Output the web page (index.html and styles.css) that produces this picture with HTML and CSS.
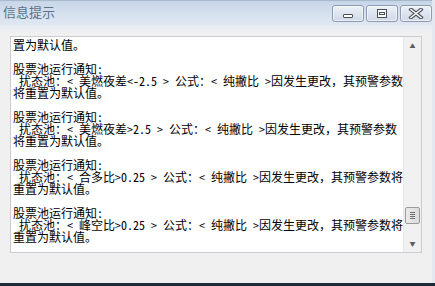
FILE: index.html
```html
<!DOCTYPE html>
<html lang="zh-CN">
<head>
    <meta charset="UTF-8">
    <title>信息提示</title>
    <link rel="stylesheet" href="styles.css">
</head>
<body>
    <div class="ventana">
        <!-- barra de título -->
        <div class="barra-titulo">
            <span class="titulo">信息提示</span>
            <div class="botones">
                <button class="btn-ventana" title="最小化">
                    <svg width="14" height="10" viewBox="0 0 14 10"><rect x="2.5" y="5.5" width="9" height="3" rx="0.5" fill="#fff" stroke="#4a4f57"/></svg>
                </button>
                <button class="btn-ventana" title="还原">
                    <svg width="14" height="10" viewBox="0 0 14 10"><rect x="2.5" y="0.5" width="9" height="8" fill="#fff" stroke="#4a4f57"/><rect x="4.5" y="3.5" width="5" height="2" fill="none" stroke="#4a4f57"/></svg>
                </button>
                <button class="btn-ventana" title="关闭">
                    <svg width="16" height="11" viewBox="0 0 16 11"><path d="M3 1.5 L13 9.5 M13 1.5 L3 9.5" stroke="#4a4f57" stroke-width="3.6" stroke-linecap="square"/><path d="M3 1.5 L13 9.5 M13 1.5 L3 9.5" stroke="#fff" stroke-width="1.6" stroke-linecap="square"/></svg>
                </button>
            </div>
        </div>

        <div class="cuerpo">
            <div class="caja-texto">
<pre class="mensajes">置为默认值<span class="ancho">。</span>

股票池运行通知:
 扰态池<span class="ancho">：</span>< 美燃夜差<-2.5 > 公式<span class="ancho">：</span>< 纯撇比 >因发生更改<span class="ancho">，</span>其预警参数
将重置为默认值<span class="ancho">。</span>

股票池运行通知:
 扰态池<span class="ancho">：</span>< 美燃夜差>2.5 > 公式<span class="ancho">：</span>< 纯撇比 >因发生更改<span class="ancho">，</span>其预警参数
将重置为默认值<span class="ancho">。</span>

股票池运行通知:
 扰态池<span class="ancho">：</span>< 合多比>0.25 > 公式<span class="ancho">：</span>< 纯撇比 >因发生更改<span class="ancho">，</span>其预警参数将
重置为默认值<span class="ancho">。</span>

股票池运行通知:
 扰态池<span class="ancho">：</span>< 峰空比>0.25 > 公式<span class="ancho">：</span>< 纯撇比 >因发生更改<span class="ancho">，</span>其预警参数将
重置为默认值<span class="ancho">。</span></pre>
                <div class="scroll">
                    <div class="flecha arriba">&#9650;</div>
                    <div class="pista">
                        <div class="pulgar"></div>
                    </div>
                    <div class="flecha abajo">&#9660;</div>
                </div>
            </div>
        </div>

        <div class="barra-tareas"></div>
    </div>
</body>
</html>
```

FILE: styles.css
```css
html, body {
    margin: 0;
    padding: 0;
}
body {
    width: 435px;
    height: 286px;
    overflow: hidden;
    background: #f0f0f0;
    font-family: "Noto Sans CJK SC", "Liberation Sans", sans-serif;
}
.ventana {
    width: 435px;
    height: 286px;
    display: flex;
    flex-direction: column;
    box-sizing: border-box;
    border-right: 3px solid #e4e9f0;
}

.barra-titulo {
    height: 25px;
    flex: none;
    display: flex;
    justify-content: space-between;
    align-items: flex-start;
    background: linear-gradient(#c6d5e8, #d7e2ef 60%, #dfe7f1);
    border-top: 1px solid #a9b9cc;
    box-sizing: border-box;
}
.titulo {
    font-size: 13px;
    line-height: 20px;
    color: #5e7089;
    padding-left: 3px;
    padding-top: 1px;
}
.botones {
    display: flex;
    gap: 2px;
    padding-top: 4px;
}
.btn-ventana {
    width: 32px;
    height: 17px;
    padding: 0;
    border: 1px solid #8c9bb1;
    border-radius: 3px;
    background: linear-gradient(#eef2f8, #dbe3ee 55%, #cfd9e6);
    box-shadow: inset 0 0 0 1px rgba(255,255,255,0.6);
    display: flex;
    align-items: center;
    justify-content: center;
}
.btn-ventana svg { display: block; }

.cuerpo {
    flex: 1;
    padding: 11px 10px 0 10px;
    background: linear-gradient(#e6ebf1, #f0f0f0 8px);
}
.caja-texto {
    height: 217px;
    box-sizing: border-box;
    border: 1px solid #c9ccd1;
    background: #fff;
    display: flex;
}
.mensajes {
    flex: 1;
    margin: 0;
    padding: 2px 0 0 2px;
    overflow: hidden;
    white-space: pre;
    font-family: "Noto Sans CJK SC", "Liberation Sans", sans-serif;
    font-feature-settings: "hwid" 1;
    font-size: 12px;
    line-height: 12px;
    color: #000;
}
/* puntuación de ancho completo */
.mensajes .ancho {
    font-feature-settings: normal;
}

.scroll {
    width: 17px;
    flex: none;
    display: flex;
    flex-direction: column;
    background: #f1f1f1;
    border-left: 1px solid #e8e8e8;
}
.flecha {
    height: 17px;
    font-size: 6px;
    line-height: 17px;
    text-align: center;
    color: #5c5c5c;
}
.pista {
    flex: 1;
}
.pulgar {
    margin: 153px 1px 0 1px;
    height: 17px;
    box-sizing: border-box;
    border: 1px solid #9a9a9a;
    border-radius: 2px;
    background: linear-gradient(90deg, #eaeaea, #dcdcdc);
    position: relative;
}
.pulgar::after {
    content: "";
    position: absolute;
    left: 4px;
    right: 4px;
    top: 4px;
    height: 7px;
    background: repeating-linear-gradient(#6d6d6d 0 1px, transparent 1px 2px);
}

.barra-tareas {
    height: 3px;
    flex: none;
    background: #1f2a37;
    margin-right: -3px;
}
```
